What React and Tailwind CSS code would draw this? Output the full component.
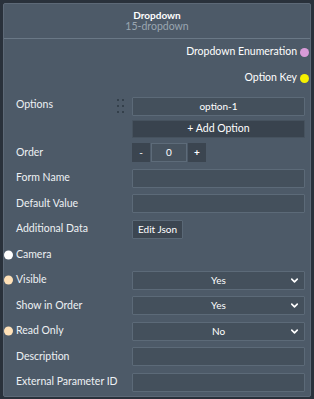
import React from "react";
import { ChevronDown } from "lucide-react";

const font = { fontFamily: "'Lato', 'Noto Sans', sans-serif" };

function Dot({ color }) {
  return (
    <span
      className={`absolute left-[-12px] top-1/2 -translate-y-1/2 w-[9px] h-[9px] rounded-full ${color}`}
    />
  );
}

function Row({ label, dot, children }) {
  return (
    <div className="relative flex items-center h-[25.5px]">
      {dot && <Dot color={dot} />}
      <div className="w-[116px] shrink-0 text-[10.5px] text-[#eef1f4]">{label}</div>
      {children}
    </div>
  );
}

function TextBox() {
  return <div className="flex-1 h-[19px] bg-[#44505c] border border-[#5c6a78] rounded-[1px]" />;
}

function Select({ value }) {
  return (
    <div className="relative flex-1 h-[19px] bg-[#44505c] border border-[#5c6a78] rounded-[1px] flex items-center justify-center text-[10px] text-white">
      {value}
      <ChevronDown size={11} strokeWidth={3.5} className="absolute right-[4px] text-white" />
    </div>
  );
}

export default function App() {
  return (
    <div className="w-[314px] h-[399px] bg-[#29313b] pt-[3px] px-[3px]" style={font}>
      <div className="relative w-[308px] h-[394px] bg-[#4d5a68] border border-[#5d6977] rounded-[2px]">
        <div className="h-[35px] border-b border-[#6a7886] flex flex-col items-center justify-center leading-[11px]">
          <div className="text-[10px] font-bold text-white">Dropdown</div>
          <div className="text-[10.5px] text-[#9aa6b1]">15-dropdown</div>
        </div>

        <div className="relative flex items-center justify-end h-[26px] pr-[13px] text-[10.5px] text-white">
          Dropdown Enumeration
          <span className="absolute right-[1px] w-[9px] h-[9px] rounded-full bg-[#d99bd8]" />
        </div>
        <div className="relative flex items-center justify-end h-[26px] pr-[13px] text-[10.5px] text-white">
          Option Key
          <span className="absolute right-[1px] w-[9px] h-[9px] rounded-full bg-[#f5f000]" />
        </div>

        <div className="flex pl-[12px] pr-[5px] pt-[6px] pb-[2px]">
          <div className="w-[100px] shrink-0 text-[10.5px] text-[#eef1f4] leading-[14px]">Options</div>
          <div className="w-[16px] shrink-0 pt-[2px] pl-[1px]">
            <div className="grid grid-cols-2 gap-x-[4px] gap-y-[4px] w-[6px]">
              {[0, 1, 2, 3, 4, 5].map((i) => (
                <span key={i} className="w-[2px] h-[2px] bg-[#34404b]" />
              ))}
            </div>
          </div>
          <div className="flex-1 flex flex-col gap-[4px]">
            <div className="h-[19px] bg-[#44505c] border border-[#5c6a78] rounded-[1px] flex items-center justify-center text-[10px] text-white">
              option-1
            </div>
            <div className="h-[18px] bg-[#39434e] border border-[#46525e] rounded-[1px] flex items-center justify-center text-[10.5px] text-white">
              + Add Option
            </div>
          </div>
        </div>

        <div className="pl-[12px] pr-[5px]">
          <Row label="Order">
            <div className="flex h-[19px] gap-[1px] text-[10px] text-white">
              <div className="w-[18px] bg-[#3b4550] flex items-center justify-center">-</div>
              <div className="w-[36px] bg-[#47535f] border border-[#5d6b79] flex items-center justify-center">0</div>
              <div className="w-[18px] bg-[#3b4550] flex items-center justify-center font-bold">+</div>
            </div>
          </Row>
          <Row label="Form Name">
            <TextBox />
          </Row>
          <Row label="Default Value">
            <TextBox />
          </Row>
          <Row label="Additional Data">
            <div className="h-[19px] px-[5px] bg-[#3c4651] border border-[#5a6876] rounded-[1px] flex items-center text-[10px] text-white">
              Edit Json
            </div>
          </Row>
          <Row label="Camera" dot="bg-white" />
          <Row label="Visible" dot="bg-[#ffe1b8]">
            <Select value="Yes" />
          </Row>
          <Row label="Show in Order">
            <Select value="Yes" />
          </Row>
          <Row label="Read Only" dot="bg-[#ffe1b8]">
            <Select value="No" />
          </Row>
          <Row label="Description">
            <TextBox />
          </Row>
          <Row label="External Parameter ID">
            <TextBox />
          </Row>
        </div>
      </div>
    </div>
  );
}
